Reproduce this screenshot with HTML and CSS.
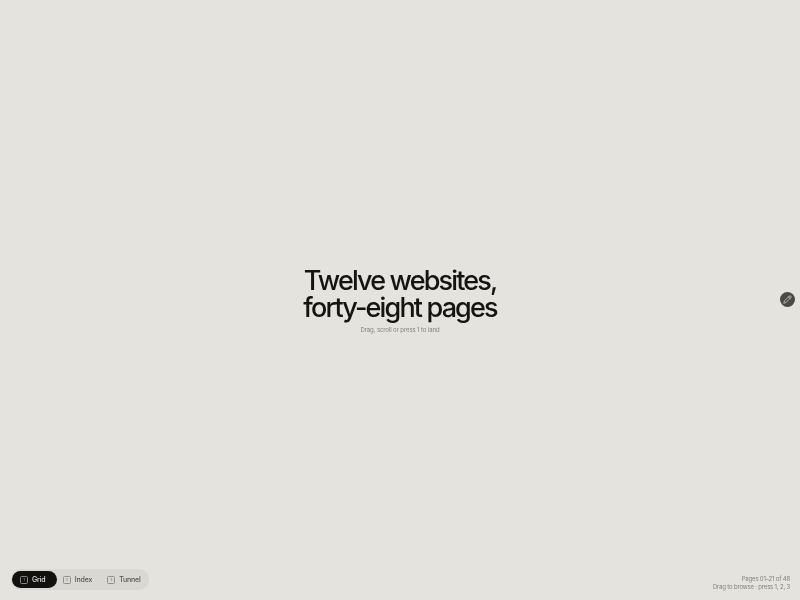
FILE: index.html
```html
<!DOCTYPE html>
<html lang="en">
<head>
<meta charset="utf-8">
<title>Twelve websites, forty-eight pages</title>
<link rel="stylesheet" href="styles.css">
</head>
<body>
<main class="hero">
  <h1 class="title">Twelve websites,<br>forty-eight pages</h1>
  <p class="hint">Drag, scroll or press 1 to land</p>
</main>
<button class="edit" aria-label="Edit">
  <svg viewBox="0 0 24 24" width="9" height="9" fill="none" stroke="currentColor" stroke-width="2" stroke-linecap="round" stroke-linejoin="round"><path d="M17 3a2.8 2.8 0 0 1 4 4L7.5 20.5 2 22l1.5-5.5Z"/><path d="m15 5 4 4"/></svg>
</button>
<footer class="footer">
  <nav class="switcher">
    <a class="mode active"><span class="key">1</span>Grid</a>
    <a class="mode"><span class="key">2</span>Index</a>
    <a class="mode"><span class="key">3</span>Tunnel</a>
  </nav>
  <div class="status">Pages 01–21 of 48<br>Drag to browse · press 1, 2, 3</div>
</footer>
</body>
</html>
```
FILE: styles.css
```css
* { box-sizing: border-box; }
html, body { height: 100%; margin: 0; }
body {
  position: relative;
  display: flex;
  flex-direction: column;
  height: 600px;
  overflow: hidden;
  background: #e4e3de;
  color: #141412;
  font-family: Inter, "Liberation Sans", sans-serif;
}
.hero {
  flex: 1;
  display: flex;
  flex-direction: column;
  align-items: center;
  justify-content: center;
  padding-top: 33px;
  text-align: center;
  filter: blur(0.3px);
}
.title {
  margin: 0;
  font-size: 27px;
  line-height: 27px;
  font-weight: 500;
  letter-spacing: -1.85px;
}
.hint {
  margin: 3.5px 0 0;
  font-size: 6px;
  line-height: 10px;
  letter-spacing: -0.1px;
  color: #83827c;
}
.edit {
  position: absolute;
  right: 5px;
  top: 292px;
  width: 15px;
  height: 15px;
  padding: 0;
  display: flex;
  align-items: center;
  justify-content: center;
  border: 0;
  border-radius: 50%;
  background: #4a4a45;
  color: #d8d7d2;
  filter: blur(0.3px);
}
.footer {
  display: flex;
  justify-content: space-between;
  align-items: flex-end;
  padding: 0 10px 10px 11px;
  filter: blur(0.3px);
}
.switcher {
  display: flex;
  align-items: center;
  width: 138px;
  height: 21px;
  padding: 2px 1px;
  border-radius: 11px;
  background: #d9d8d2;
}
.mode {
  display: flex;
  align-items: center;
  gap: 4px;
  height: 17px;
  padding: 0 9px 0 6px;
  border-radius: 9px;
  font-size: 7px;
  letter-spacing: -0.2px;
  font-weight: 500;
  color: #55544f;
}
.mode.active {
  padding: 0 11.5px 0 8px;
  background: #111110;
  color: #e4e3de;
}
.key {
  display: flex;
  align-items: center;
  justify-content: center;
  width: 8px;
  height: 8px;
  border: 0.75px solid currentColor;
  border-radius: 1.5px;
  font-size: 4px;
  opacity: 0.55;
}
.status {
  margin-bottom: -0.5px;
  font-size: 6px;
  line-height: 8px;
  letter-spacing: -0.18px;
  text-align: right;
  color: #83827c;
}
```
